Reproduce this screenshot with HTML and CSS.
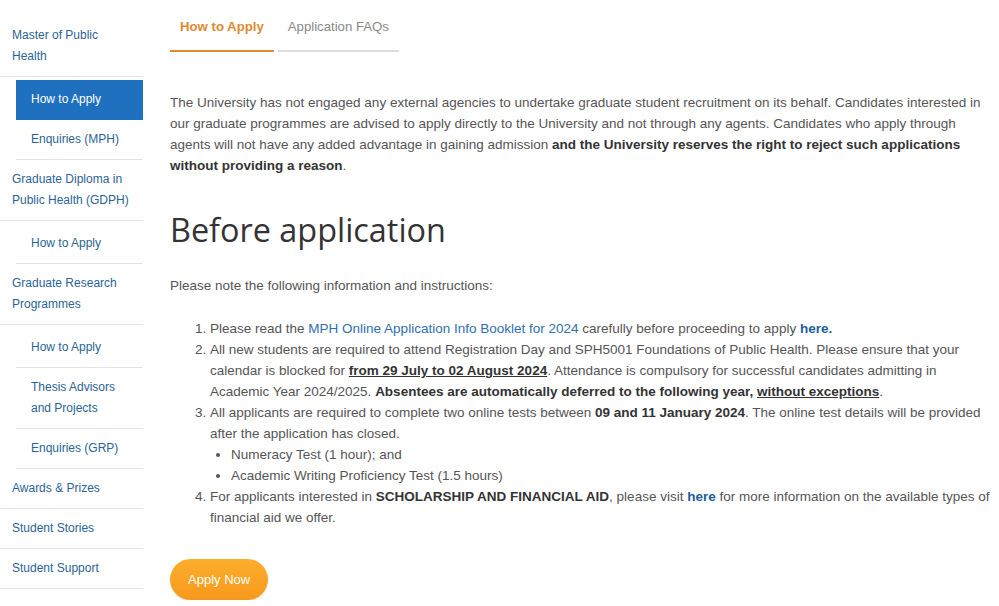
FILE: index.html
```html
<!DOCTYPE html>
<html lang="en">
<head>
    <meta charset="UTF-8">
    <meta name="viewport" content="width=device-width, initial-scale=1.0">
    <title>How to Apply</title>
    <link rel="stylesheet" href="styles.css">
</head>
<body>

    <div class="page">

        <!-- side menu -->
        <nav class="side-nav">
            <ul class="nav-list">
                <li>
                    <a class="nav-link" href="#">Master of Public Health</a>
                    <ul class="sub-list">
                        <li><a class="sub-link active" href="#">How to Apply</a></li>
                        <li><a class="sub-link" href="#">Enquiries (MPH)</a></li>
                    </ul>
                </li>
                <li>
                    <a class="nav-link" href="#">Graduate Diploma in Public Health (GDPH)</a>
                    <ul class="sub-list">
                        <li><a class="sub-link" href="#">How to Apply</a></li>
                    </ul>
                </li>
                <li>
                    <a class="nav-link" href="#">Graduate Research Programmes</a>
                    <ul class="sub-list">
                        <li><a class="sub-link" href="#">How to Apply</a></li>
                        <li><a class="sub-link" href="#">Thesis Advisors and Projects</a></li>
                        <li><a class="sub-link" href="#">Enquiries (GRP)</a></li>
                    </ul>
                </li>
                <li><a class="nav-link" href="#">Awards &amp; Prizes</a></li>
                <li><a class="nav-link" href="#">Student Stories</a></li>
                <li><a class="nav-link" href="#">Student Support</a></li>
            </ul>
        </nav>

        <!-- main content -->
        <main class="content">
            <ul class="tabs">
                <li class="tab active">How to Apply</li>
                <li class="tab">Application FAQs</li>
            </ul>

            <p class="notice">The University has not engaged any external agencies to undertake graduate student recruitment on its behalf. Candidates interested in our graduate programmes are advised to apply directly to the University and not through any agents. Candidates who apply through agents will not have any added advantage in gaining admission <strong>and the University reserves the right to reject such applications without providing a reason</strong>.</p>

            <h2 class="section-title">Before application</h2>

            <p class="intro">Please note the following information and instructions:</p>

            <ol class="steps">
                <li>Please read the <a href="#">MPH Online Application Info Booklet for 2024</a> carefully before proceeding to apply <a class="strong-link" href="#">here.</a></li>
                <li>All new students are required to attend Registration Day and SPH5001 Foundations of Public Health. Please ensure that your calendar is blocked for <strong><u>from 29 July to 02 August 2024</u></strong>. Attendance is compulsory for successful candidates admitting in Academic Year 2024/2025. <strong>Absentees are automatically deferred to the following year, <u>without exceptions</u></strong>.</li>
                <li>All applicants are required to complete two online tests between <strong>09 and 11 January 2024</strong>. The online test details will be provided after the application has closed.
                    <ul class="tests">
                        <li>Numeracy Test (1 hour); and</li>
                        <li>Academic Writing Proficiency Test (1.5 hours)</li>
                    </ul>
                </li>
                <li>For applicants interested in <strong>SCHOLARSHIP AND FINANCIAL AID</strong>, please visit <a class="strong-link" href="#">here</a> for more information on the available types of financial aid we offer.</li>
            </ol>

            <a class="btn-apply" href="#">Apply Now</a>
        </main>

    </div>

</body>
</html>
```

FILE: styles.css
```css
/* general */
body {
    margin: 0;
    padding: 0;
    font-family: 'Liberation Sans', Arial, sans-serif;
    color: #555;
    background: #fff;
}

a {
    text-decoration: none;
}

.page {
    display: flex;
    gap: 27px;
}

/* side menu */
.side-nav {
    width: 143px;
    flex-shrink: 0;
    padding-top: 16px;
}

.nav-list, .sub-list {
    list-style: none;
    margin: 0;
    padding: 0;
}

.sub-list {
    margin-top: 3px;
    margin-left: 16px;
}

.nav-link, .sub-link {
    display: block;
    font-size: 12px;
    line-height: 21px;
    color: #2a6496;
    padding: 9px 9px 9px 12px;
    border-bottom: 1px solid #e3e3e3;
}

.sub-link {
    padding-left: 15px;
}

.sub-link.active {
    background: #1f70bf;
    color: #fff;
    border-bottom-color: #1f70bf;
}

/* main column */
.content {
    width: 822px;
    font-size: 13.5px;
    line-height: 21px;
}

.content strong {
    color: #333;
}

.content a {
    color: #2f70b0;
}

.content a.strong-link {
    color: #1d5e9c;
    font-weight: bold;
}

/* tabs */
.tabs {
    list-style: none;
    margin: 0;
    padding: 0;
    display: flex;
    gap: 4px;
}

.tab {
    font-size: 13.2px;
    padding: 16px 10px 13px;
    color: #888;
    border-bottom: 2px solid #ddd;
}

.tab.active {
    color: #e08a2e;
    font-weight: bold;
    border-bottom-color: #e08a2e;
}

.notice {
    margin: 40px 0 0;
}

.section-title {
    font-family: 'Open Sans', sans-serif;
    font-weight: normal;
    font-size: 32.4px;
    line-height: 40px;
    color: #333;
    margin: 33px 0 26px;
}

.intro {
    margin: 0 0 22px;
}

.steps {
    margin: 0;
    padding-left: 40px;
}

.tests {
    margin: 0;
    padding-left: 21px;
    list-style: disc;
}

/* button */
.btn-apply {
    display: inline-block;
    margin-top: 31px;
    padding: 10px 18px;
    font-size: 13px;
    line-height: 21px;
    border-radius: 21px;
    background: linear-gradient(#fbad2c, #f8991c);
    color: #fff !important;
    box-shadow: 0 1px 2px rgba(0, 0, 0, 0.12);
}
```
